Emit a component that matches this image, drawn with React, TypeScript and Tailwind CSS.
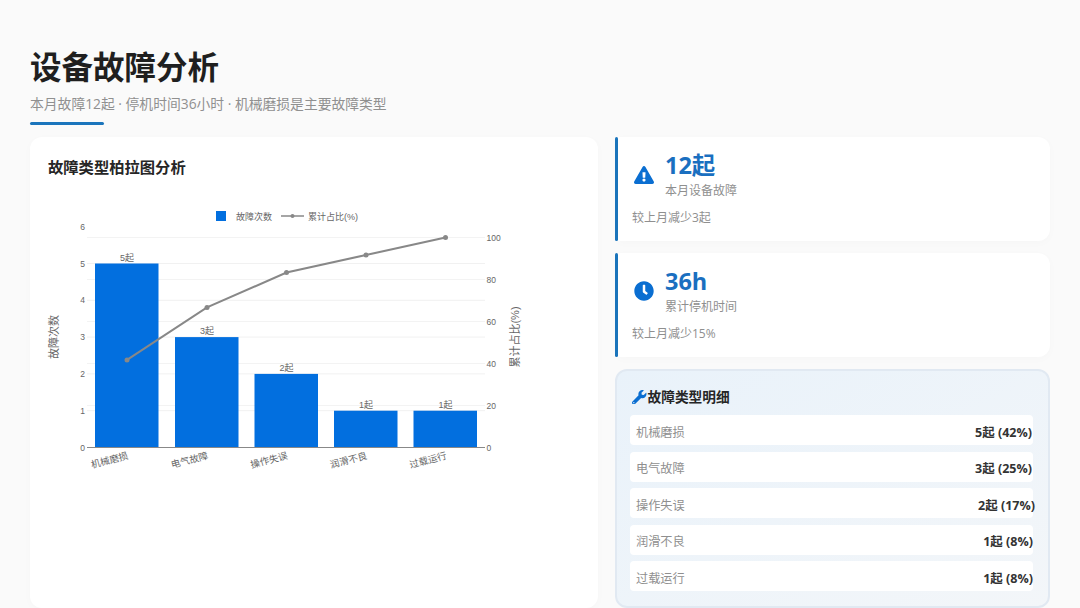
import { FaClock, FaExclamationTriangle, FaWrench } from "react-icons/fa";

const font = "[font-family:'Open_Sans','Noto_Sans_CJK_SC',sans-serif]";

const bars = [
  { name: "机械磨损", value: 5, x: 95, pct: 41.7 },
  { name: "电气故障", value: 3, x: 175, pct: 66.7 },
  { name: "操作失误", value: 2, x: 254.5, pct: 83.3 },
  { name: "润滑不良", value: 1, x: 334, pct: 91.7 },
  { name: "过载运行", value: 1, x: 413.5, pct: 100 },
];

const details = [
  { name: "机械磨损", value: "5起 (42%)", pad: "pr-[1px]" },
  { name: "电气故障", value: "3起 (25%)", pad: "pr-[1px]" },
  { name: "操作失误", value: "2起 (17%)", pad: "-mr-[2px]" },
  { name: "润滑不良", value: "1起 (8%)", pad: "pr-0" },
  { name: "过载运行", value: "1起 (8%)", pad: "pr-0" },
];

const leftY = (v: number) => 447.5 - v * 36.8;
const rightY = (v: number) => 447.5 - v * 2.1;

function ParetoChart() {
  const points = bars.map((b) => `${b.x + 32},${rightY(b.pct)}`).join(" ");
  return (
    <svg width="568" height="340" viewBox="30 190 568 340" className="block">
      <g fontFamily="'Liberation Sans','Noto Sans CJK SC',sans-serif" fontSize="9" fill="#666">
        {/* legend */}
        <rect x="216" y="211" width="10" height="10" fill="#026fdf" />
        <text x="236" y="220">故障次数</text>
        <line x1="281" y1="216" x2="304" y2="216" stroke="#888" strokeWidth="1.5" />
        <circle cx="292.5" cy="216" r="2" fill="#888" />
        <text x="308" y="220">累计占比(%)</text>

        {/* grid */}
        {[1, 2, 3, 4, 5].map((v) => (
          <line key={v} x1="87" x2="485" y1={leftY(v)} y2={leftY(v)} stroke="#f1f1f1" />
        ))}
        {[20, 40, 60, 80, 100].map((v) => (
          <line key={v} x1="87" x2="485" y1={rightY(v)} y2={rightY(v)} stroke="#f3f3f3" />
        ))}

        {/* axis ticks */}
        {[0, 1, 2, 3, 4, 5, 6].map((v) => (
          <text key={v} x="85" y={leftY(v) + 3} fontSize="8.5" textAnchor="end">{v}</text>
        ))}
        {[0, 20, 40, 60, 80, 100].map((v) => (
          <text key={v} x="486.5" y={rightY(v) + 3} fontSize="8.5">{v}</text>
        ))}

        {/* bars */}
        {bars.map((b) => (
          <g key={b.name}>
            <rect x={b.x} y={leftY(b.value)} width="63.5" height={b.value * 36.8} fill="#026fdf" />
            <text x={b.x + 32} y={leftY(b.value) - 3} textAnchor="middle">{b.value}起</text>
            <text x={b.x + 14.5} y="460" fontSize="9.5" textAnchor="middle" dominantBaseline="central" transform={`rotate(-15 ${b.x + 14.5} 460)`}>{b.name}</text>
          </g>
        ))}
        <line x1="87" x2="485" y1="447.5" y2="447.5" stroke="#888" strokeWidth="1" />

        {/* cumulative line */}
        <polyline points={points} fill="none" stroke="#888" strokeWidth="2" />
        {bars.map((b) => (
          <circle key={b.name} cx={b.x + 32} cy={rightY(b.pct)} r="2.5" fill="#888" />
        ))}

        {/* axis titles */}
        <text x="55" y="337" fontSize="11" textAnchor="middle" dominantBaseline="middle" transform="rotate(-90 55 337)">故障次数</text>
        <text x="516" y="337" fontSize="11" textAnchor="middle" dominantBaseline="middle" transform="rotate(-90 516 337)">累计占比(%)</text>
      </g>
    </svg>
  );
}

function StatCard({ icon, value, label, note }: { icon: React.ReactNode; value: string; label: string; note: string }) {
  return (
    <div className="flex h-[104px]">
      <div className="w-[3px] rounded-full bg-[#1b75bc]" />
      <div className="flex-1 rounded-r-xl bg-white pl-[14px] pt-[13px] shadow-[0_2px_10px_rgba(0,0,0,0.02)]">
        <div className="flex items-center">
          <div className="flex w-[33px] pl-[2px] text-[20px] text-[#0a6ed1]">{icon}</div>
          <div>
            <div className="text-[23.5px] leading-[30px] font-bold text-[#1a6fc0]">{value}</div>
            <div className="mt-[3px] text-[12px] leading-[16px] text-[#8f8f8f]">{label}</div>
          </div>
        </div>
        <div className="mt-[11px] text-[12px] leading-[16px] text-[#8f8f8f]">{note}</div>
      </div>
    </div>
  );
}

export default function App() {
  return (
    <div className={`${font} h-[608px] w-[1080px] overflow-hidden bg-[#fafafa] px-[30px] pt-[44px]`}>
      <h1 className="text-[31.5px] leading-[46px] font-bold text-[#1f1f1f]">设备故障分析</h1>
      <p className="mt-[4px] text-[13.8px] leading-[20px] text-[#909090]">本月故障12起 · 停机时间36小时 · 机械磨损是主要故障类型</p>
      <div className="mt-[8px] h-[3px] w-[74px] rounded-full bg-[#1b75bc]" />

      <div className="mt-[12px] grid h-[470px] grid-cols-[568px_435px] gap-[17px]">
        <section className="rounded-xl bg-white pt-[19px] shadow-[0_2px_10px_rgba(0,0,0,0.02)]">
          <h2 className="pl-[18px] text-[15.3px] leading-[22px] font-bold text-[#262626]">故障类型柏拉图分析</h2>
          <div className="mt-[12px]">
            <ParetoChart />
          </div>
        </section>

        <div className="flex flex-col gap-[12px]">
          <StatCard icon={<FaExclamationTriangle />} value="12起" label="本月设备故障" note="较上月减少3起" />
          <StatCard icon={<FaClock />} value="36h" label="累计停机时间" note="较上月减少15%" />

          <section className="h-[239px] rounded-xl border-2 border-[#e1e9f2] bg-gradient-to-br from-[#e9f2fa] to-[#f3f6f9] pl-[13px] pr-[15px] pt-[15px]">
            <h3 className="flex items-center text-[13.7px] leading-[22px] font-bold text-[#262626]">
              <FaWrench className="ml-[2px] text-[14.5px] text-[#0a6ed1]" />
              <span className="ml-[1px]">故障类型明细</span>
            </h3>
            <ul className="mt-[7px] flex flex-col gap-[6.5px]">
              {details.map((d) => (
                <li key={d.name} className="flex h-[30px] items-center justify-between rounded-[4px] bg-white pl-[6px]">
                  <span className="pt-[6px] text-[12.2px] text-[#8f8f8f]">{d.name}</span>
                  <span className={`pt-[6px] text-[12.5px] font-bold text-[#333] ${d.pad}`}>{d.value}</span>
                </li>
              ))}
            </ul>
          </section>
        </div>
      </div>
    </div>
  );
}
